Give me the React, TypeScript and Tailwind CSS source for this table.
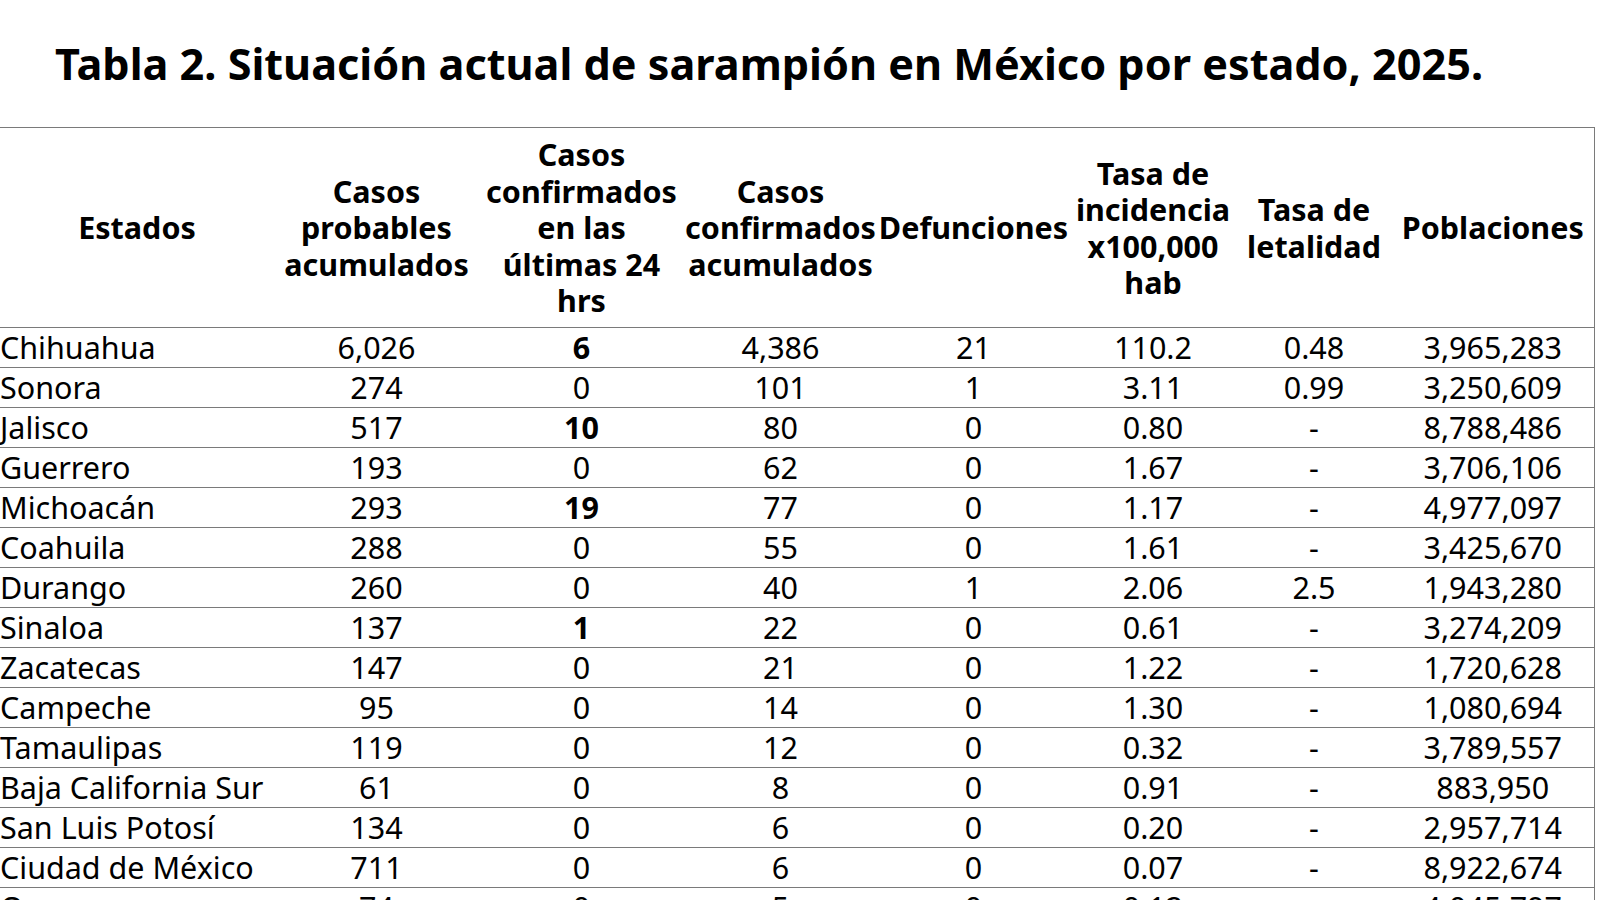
import React from "react";

type Row = [string, string, string, string, string, string, string, string];

const rows: Row[] = [
  ["Chihuahua", "6,026", "6", "4,386", "21", "110.2", "0.48", "3,965,283"],
  ["Sonora", "274", "0", "101", "1", "3.11", "0.99", "3,250,609"],
  ["Jalisco", "517", "10", "80", "0", "0.80", "-", "8,788,486"],
  ["Guerrero", "193", "0", "62", "0", "1.67", "-", "3,706,106"],
  ["Michoacán", "293", "19", "77", "0", "1.17", "-", "4,977,097"],
  ["Coahuila", "288", "0", "55", "0", "1.61", "-", "3,425,670"],
  ["Durango", "260", "0", "40", "1", "2.06", "2.5", "1,943,280"],
  ["Sinaloa", "137", "1", "22", "0", "0.61", "-", "3,274,209"],
  ["Zacatecas", "147", "0", "21", "0", "1.22", "-", "1,720,628"],
  ["Campeche", "95", "0", "14", "0", "1.30", "-", "1,080,694"],
  ["Tamaulipas", "119", "0", "12", "0", "0.32", "-", "3,789,557"],
  ["Baja California Sur", "61", "0", "8", "0", "0.91", "-", "883,950"],
  ["San Luis Potosí", "134", "0", "6", "0", "0.20", "-", "2,957,714"],
  ["Ciudad de México", "711", "0", "6", "0", "0.07", "-", "8,922,674"],
  ["Oaxaca", "74", "0", "5", "0", "0.12", "-", "4,045,797"],
];

const widths = [274, 205, 205, 193, 193, 166, 156, 202];

export default function App() {
  return (
    <div
      className="w-[1600px] h-[900px] overflow-hidden bg-white text-black"
      style={{ fontFamily: '"Noto Sans", "Open Sans", sans-serif' }}
    >
      <h1 className="pt-[42px] pl-[55px] text-[43.2px] leading-[43px] font-bold whitespace-nowrap">
        Tabla 2. Situación actual de sarampión en México por estado, 2025.
      </h1>
      <table className="mt-[42px] table-fixed border-collapse w-[1594px]">
        <colgroup>
          {widths.map((w, i) => (
            <col key={i} style={{ width: w }} />
          ))}
        </colgroup>
        <thead>
          <tr className="h-[200px] border-t border-b border-r border-[#7a7a7a] text-[30.5px] leading-[36.5px] font-bold">
            <th className="p-0 text-center align-middle whitespace-nowrap">Estados</th>
            <th className="p-0 text-center align-middle whitespace-nowrap">
              Casos<br />probables<br />acumulados
            </th>
            <th className="p-0 text-center align-middle whitespace-nowrap">
              Casos<br />confirmados<br />en las<br />últimas 24<br />hrs
            </th>
            <th className="p-0 text-center align-middle whitespace-nowrap">
              Casos<br />confirmados<br />acumulados
            </th>
            <th className="p-0 text-center align-middle whitespace-nowrap">Defunciones</th>
            <th className="p-0 text-center align-middle whitespace-nowrap">
              Tasa de<br />incidencia<br />x100,000<br />hab
            </th>
            <th className="p-0 text-center align-middle whitespace-nowrap">
              Tasa de<br />letalidad
            </th>
            <th className="p-0 text-center align-middle whitespace-nowrap">Poblaciones</th>
          </tr>
        </thead>
        <tbody className="text-[30.5px] leading-[39px]">
          {rows.map((r) => (
            <tr key={r[0]} className="h-[40px] border-b border-r border-[#7a7a7a]">
              <td className="p-0 text-left whitespace-nowrap">{r[0]}</td>
              <td className="p-0 text-center">{r[1]}</td>
              <td className={r[2] !== "0" ? "p-0 text-center font-bold" : "p-0 text-center"}>
                {r[2]}
              </td>
              <td className="p-0 text-center">{r[3]}</td>
              <td className="p-0 text-center">{r[4]}</td>
              <td className="p-0 text-center">{r[5]}</td>
              <td className="p-0 text-center">{r[6]}</td>
              <td className="p-0 text-center">{r[7]}</td>
            </tr>
          ))}
        </tbody>
      </table>
    </div>
  );
}
